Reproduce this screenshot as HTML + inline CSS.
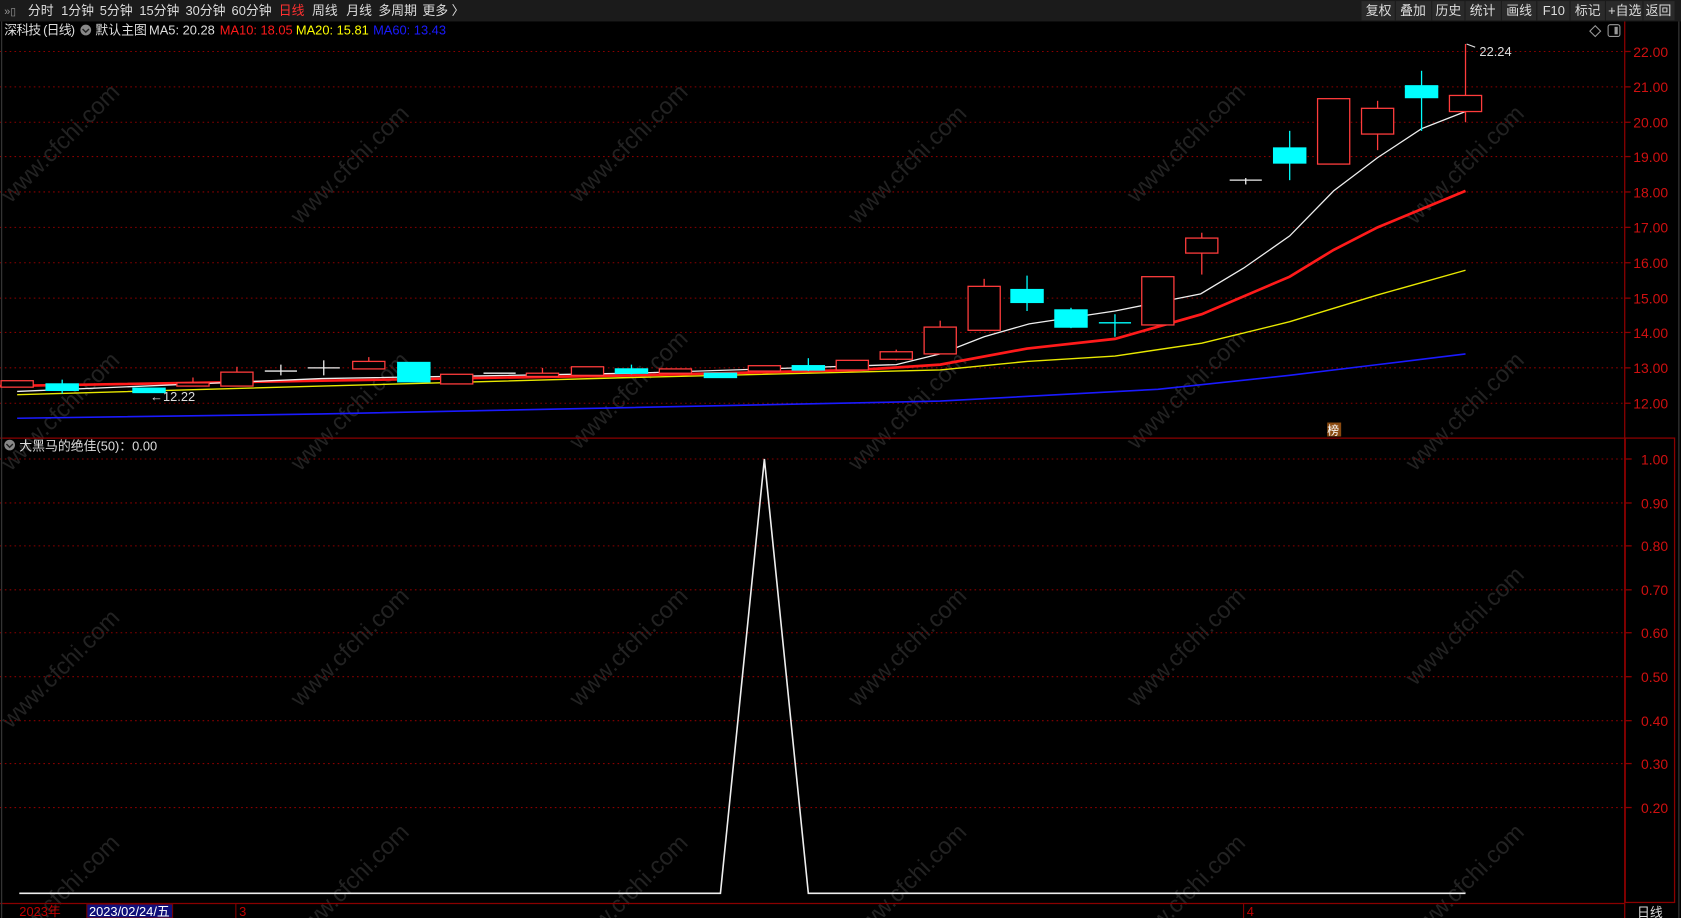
<!DOCTYPE html>
<html><head><meta charset="utf-8"><style>
html,body{margin:0;padding:0;background:#000;overflow:hidden}
svg{display:block}
text{font-family:"Liberation Sans","Noto Sans CJK SC",sans-serif}
</style></head><body>
<svg width="1681" height="918" viewBox="0 0 1568 856" preserveAspectRatio="none" xmlns="http://www.w3.org/2000/svg">
<rect width="1568" height="856" fill="#000"/>
<!-- watermarks -->
<g fill="#222" font-size="22">
<text transform="translate(10,190) rotate(-45)">www.cfchi.com</text>
<text transform="translate(280,210) rotate(-45)">www.cfchi.com</text>
<text transform="translate(540,190) rotate(-45)">www.cfchi.com</text>
<text transform="translate(800,210) rotate(-45)">www.cfchi.com</text>
<text transform="translate(1060,190) rotate(-45)">www.cfchi.com</text>
<text transform="translate(1320,210) rotate(-45)">www.cfchi.com</text>
<text transform="translate(10,440) rotate(-45)">www.cfchi.com</text>
<text transform="translate(280,440) rotate(-45)">www.cfchi.com</text>
<text transform="translate(540,420) rotate(-45)">www.cfchi.com</text>
<text transform="translate(800,440) rotate(-45)">www.cfchi.com</text>
<text transform="translate(1060,420) rotate(-45)">www.cfchi.com</text>
<text transform="translate(1320,440) rotate(-45)">www.cfchi.com</text>
<text transform="translate(10,680) rotate(-45)">www.cfchi.com</text>
<text transform="translate(280,660) rotate(-45)">www.cfchi.com</text>
<text transform="translate(540,660) rotate(-45)">www.cfchi.com</text>
<text transform="translate(800,660) rotate(-45)">www.cfchi.com</text>
<text transform="translate(1060,660) rotate(-45)">www.cfchi.com</text>
<text transform="translate(1320,640) rotate(-45)">www.cfchi.com</text>
<text transform="translate(10,890) rotate(-45)">www.cfchi.com</text>
<text transform="translate(280,880) rotate(-45)">www.cfchi.com</text>
<text transform="translate(540,890) rotate(-45)">www.cfchi.com</text>
<text transform="translate(800,880) rotate(-45)">www.cfchi.com</text>
<text transform="translate(1060,890) rotate(-45)">www.cfchi.com</text>
<text transform="translate(1320,880) rotate(-45)">www.cfchi.com</text>
</g>
<!-- toolbar -->
<rect x="0" y="0" width="1568" height="20" fill="#1b1b1b"/>
<g fill="#ddd" font-size="12">
<text x="4" y="14" fill="#999" font-size="10">»▯</text>
<text x="26" y="14">分时</text><text x="57" y="14">1分钟</text><text x="93" y="14">5分钟</text>
<text x="130" y="14">15分钟</text><text x="173" y="14">30分钟</text><text x="216" y="14">60分钟</text>
<text x="260" y="14" fill="#ff3030">日线</text><text x="291" y="14">周线</text><text x="323" y="14">月线</text>
<text x="353" y="14">多周期</text><text x="394" y="14">更多 〉</text>
</g>
<g fill="#2a2a2a">
<rect x="1270" y="1" width="31" height="18"/><rect x="1302" y="1" width="33" height="18"/><rect x="1336" y="1" width="30" height="18"/>
<rect x="1367" y="1" width="33" height="18"/><rect x="1401" y="1" width="32" height="18"/><rect x="1434" y="1" width="30" height="18"/>
<rect x="1465" y="1" width="32" height="18"/><rect x="1498" y="1" width="34" height="18"/><rect x="1533" y="1" width="29" height="18"/>
</g>
<g fill="#ddd" font-size="12">
<text x="1274" y="14">复权</text><text x="1306" y="14">叠加</text><text x="1339" y="14">历史</text><text x="1371" y="14">统计</text>
<text x="1405" y="14">画线</text><text x="1439" y="14">F10</text><text x="1469" y="14">标记</text><text x="1500" y="14">+自选</text><text x="1535" y="14">返回</text>
</g>
<!-- title row -->
<g font-size="12">
<text x="4" y="32" fill="#ddd" textLength="66">深科技 (日线)</text>
<circle cx="80" cy="28" r="5" fill="#888"/><path d="M77 27 L80 30 L83 27" stroke="#222" fill="none" stroke-width="1.3"/>
<text x="89" y="32" fill="#ddd">默认主图</text>
<text x="139" y="32" fill="#ddd">MA5: 20.28</text>
<text x="205" y="32" fill="#ff1a1a">MA10: 18.05</text>
<text x="276" y="32" fill="#ffff00">MA20: 15.81</text>
<text x="348" y="32" fill="#1a1aff">MA60: 13.43</text>
</g>
<path d="M1488 24 L1493 29 L1488 34 L1483 29 Z" fill="none" stroke="#999"/>
<rect x="1500" y="23" width="11" height="11" rx="2" fill="none" stroke="#999"/><rect x="1506" y="25" width="3" height="7" fill="#999"/>
<!-- grid -->
<g stroke="#8a0000" stroke-dasharray="1.5,3" stroke-width="1">
<line x1="0" y1="48" x2="1515" y2="48"/><line x1="0" y1="81" x2="1515" y2="81"/><line x1="0" y1="114" x2="1515" y2="114"/>
<line x1="0" y1="146" x2="1515" y2="146"/><line x1="0" y1="179" x2="1515" y2="179"/><line x1="0" y1="212" x2="1515" y2="212"/>
<line x1="0" y1="245" x2="1515" y2="245"/><line x1="0" y1="278" x2="1515" y2="278"/><line x1="0" y1="310" x2="1515" y2="310"/>
<line x1="0" y1="343" x2="1515" y2="343"/><line x1="0" y1="376" x2="1515" y2="376"/>
<line x1="0" y1="428" x2="1515" y2="428"/><line x1="0" y1="469" x2="1515" y2="469"/><line x1="0" y1="509" x2="1515" y2="509"/>
<line x1="0" y1="550" x2="1515" y2="550"/><line x1="0" y1="590" x2="1515" y2="590"/><line x1="0" y1="631" x2="1515" y2="631"/>
<line x1="0" y1="672" x2="1515" y2="672"/><line x1="0" y1="712" x2="1515" y2="712"/><line x1="0" y1="753" x2="1515" y2="753"/>
</g>
<!-- axes -->
<g stroke="#8a0000" stroke-width="1.2" fill="none">
<line x1="1515.5" y1="20" x2="1515.5" y2="856"/>
<line x1="0" y1="408.5" x2="1515" y2="408.5"/>
<rect x="1516" y="408.5" width="46" height="433"/>
<line x1="0" y1="842.5" x2="1515" y2="842.5"/>
<line x1="1515" y1="48" x2="1521" y2="48"/><line x1="1515" y1="81" x2="1521" y2="81"/><line x1="1515" y1="114" x2="1521" y2="114"/>
<line x1="1515" y1="146" x2="1521" y2="146"/><line x1="1515" y1="179" x2="1521" y2="179"/><line x1="1515" y1="212" x2="1521" y2="212"/>
<line x1="1515" y1="245" x2="1521" y2="245"/><line x1="1515" y1="278" x2="1521" y2="278"/><line x1="1515" y1="310" x2="1521" y2="310"/>
<line x1="1515" y1="343" x2="1521" y2="343"/><line x1="1515" y1="376" x2="1521" y2="376"/>
<line x1="1516" y1="428" x2="1522" y2="428"/><line x1="1516" y1="469" x2="1522" y2="469"/><line x1="1516" y1="509" x2="1522" y2="509"/>
<line x1="1516" y1="550" x2="1522" y2="550"/><line x1="1516" y1="590" x2="1522" y2="590"/><line x1="1516" y1="631" x2="1522" y2="631"/>
<line x1="1516" y1="672" x2="1522" y2="672"/><line x1="1516" y1="712" x2="1522" y2="712"/><line x1="1516" y1="753" x2="1522" y2="753"/>
<line x1="1.5" y1="20" x2="1.5" y2="856" stroke="#333"/>
<line x1="1566" y1="20" x2="1566" y2="856" stroke="#333"/>
</g>
<g fill="#d01010" font-size="13" text-anchor="end">
<text x="1556" y="53">22.00</text><text x="1556" y="86">21.00</text><text x="1556" y="119">20.00</text><text x="1556" y="151">19.00</text>
<text x="1556" y="184">18.00</text><text x="1556" y="217">17.00</text><text x="1556" y="250">16.00</text><text x="1556" y="283">15.00</text>
<text x="1556" y="315">14.00</text><text x="1556" y="348">13.00</text><text x="1556" y="381">12.00</text>
<text x="1556" y="433">1.00</text><text x="1556" y="474">0.90</text><text x="1556" y="514">0.80</text><text x="1556" y="555">0.70</text>
<text x="1556" y="595">0.60</text><text x="1556" y="636">0.50</text><text x="1556" y="677">0.40</text><text x="1556" y="717">0.30</text><text x="1556" y="758">0.20</text>
</g>
<!-- MA lines -->
<polyline fill="none" stroke="#1a1aff" stroke-width="1.5" points="16,390 300,386 589,380 877,374 1080,363 1203,350 1285,340 1367,330"/>
<polyline fill="none" stroke="#e8e800" stroke-width="1.3" points="16,368 300,360 589,352 877,345 958,337 1040,332 1121,320 1203,300 1285,275 1367,252"/>
<polyline fill="none" stroke="#ff1a1a" stroke-width="2.5" points="0,360 300,355 589,350 800,345 877,340 958,325 1040,316 1121,293 1203,258 1244,233 1285,212 1326,195 1367,178"/>
<polyline fill="none" stroke="#eee" stroke-width="1.2" points="16,365 300,353 590,348 836,340 877,330 918,314 960,302 1040,290 1120,274 1160,250 1203,220 1244,178 1285,147 1326,120 1367,104"/>
<!-- candles -->
<g stroke="#ff3c3c" fill="none" stroke-width="1.2">
<line x1="1367" y1="41" x2="1367" y2="114"/><rect x="1352" y="89" width="30" height="15" fill="#000"/>
<line x1="1285" y1="94" x2="1285" y2="140"/><rect x="1270" y="101" width="30" height="24" fill="#000"/>
<rect x="1229" y="92" width="30" height="61" fill="#000"/>
<line x1="1121" y1="217" x2="1121" y2="256"/><rect x="1106" y="222" width="30" height="14" fill="#000"/>
<rect x="1065" y="258" width="30" height="45" fill="#000"/>
<line x1="918" y1="260" x2="918" y2="308"/><rect x="903" y="267" width="30" height="41" fill="#000"/>
<line x1="877" y1="299" x2="877" y2="330"/><rect x="862" y="305" width="30" height="25" fill="#000"/>
<line x1="836" y1="326" x2="836" y2="336"/><rect x="821" y="328" width="30" height="7" fill="#000"/>
<rect x="780" y="336" width="30" height="9" fill="#000"/>
<rect x="698" y="341" width="30" height="5" fill="#000"/>
<rect x="615" y="344" width="30" height="4" fill="#000"/>
<rect x="533" y="342" width="30" height="8" fill="#000"/>
<line x1="506" y1="343" x2="506" y2="351"/><rect x="491" y="348" width="30" height="3" fill="#000"/>
<rect x="411" y="349" width="30" height="9" fill="#000"/>
<line x1="344" y1="333" x2="344" y2="337"/><rect x="329" y="337" width="30" height="7" fill="#000"/>
<line x1="221" y1="342" x2="221" y2="347"/><rect x="206" y="347" width="30" height="13" fill="#000"/>
<rect x="165" y="357" width="30" height="3" fill="#000"/>
<line x1="180" y1="352" x2="180" y2="357"/>
<rect x="1" y="355" width="30" height="6" fill="#000"/>
</g>
<g stroke="#00ffff" fill="#00ffff" stroke-width="1.2">
<line x1="1326" y1="66" x2="1326" y2="122"/><rect x="1311" y="80" width="30" height="11"/>
<line x1="1203" y1="122" x2="1203" y2="168"/><rect x="1188" y="138" width="30" height="14"/>
<line x1="1040" y1="293" x2="1040" y2="314"/><line x1="1025" y1="301" x2="1055" y2="301"/>
<line x1="999" y1="287" x2="999" y2="306"/><rect x="984" y="289" width="30" height="16"/>
<line x1="958" y1="257" x2="958" y2="290"/><rect x="943" y="270" width="30" height="12"/>
<line x1="754" y1="334" x2="754" y2="346"/><rect x="739" y="341" width="30" height="4"/>
<rect x="657" y="348" width="30" height="4"/>
<line x1="589" y1="340" x2="589" y2="349"/><rect x="574" y="344" width="30" height="4"/>
<rect x="371" y="338" width="30" height="18"/>
<rect x="124" y="362" width="30" height="4"/>
<line x1="58" y1="354" x2="58" y2="367"/><rect x="43" y="358" width="30" height="6"/>
</g>
<g stroke="#eee" stroke-width="1.2">
<line x1="1147" y1="168" x2="1177" y2="168"/><line x1="1162" y1="166" x2="1162" y2="172"/>
<line x1="451" y1="348" x2="481" y2="348"/>
<line x1="287" y1="343" x2="317" y2="343"/><line x1="302" y1="336" x2="302" y2="350"/>
<line x1="247" y1="346" x2="277" y2="346"/><line x1="262" y1="340" x2="262" y2="350"/>
</g>
<g fill="#ddd" font-size="12">
<text x="1380" y="52">22.24</text>
<path d="M1368 41 L1376 44" stroke="#ddd" fill="none"/>
<text x="140" y="374">←12.22</text>
</g>
<rect x="1238" y="394" width="13" height="13" fill="#8a4a10"/>
<text x="1238" y="405" fill="#fff" font-size="11">榜</text>
<!-- sub panel -->
<circle cx="9" cy="415" r="5" fill="#888"/><path d="M6 414 L9 417 L12 414" stroke="#222" fill="none" stroke-width="1.3"/>
<text x="18" y="420" fill="#ddd" font-size="12">大黑马的绝佳(50)：0.00</text>
<polyline fill="none" stroke="#eee" stroke-width="1.5" points="18,833 672,833 713,428 754,833 1367,833"/>
<!-- date bar -->
<g font-size="12">
<text x="18" y="854" fill="#c00000">2023年</text>
<rect x="81" y="843" width="80" height="13" fill="#10107a" stroke="#700"/>
<text x="83" y="854" fill="#fff">2023/02/24/五</text>
<line x1="220" y1="843" x2="220" y2="856" stroke="#800"/><text x="223" y="854" fill="#c00000">3</text>
<line x1="1160" y1="843" x2="1160" y2="856" stroke="#800"/><text x="1163" y="854" fill="#c00000">4</text>
<text x="1527" y="855" fill="#ddd">日线</text>
</g>
</svg>
</body></html>
